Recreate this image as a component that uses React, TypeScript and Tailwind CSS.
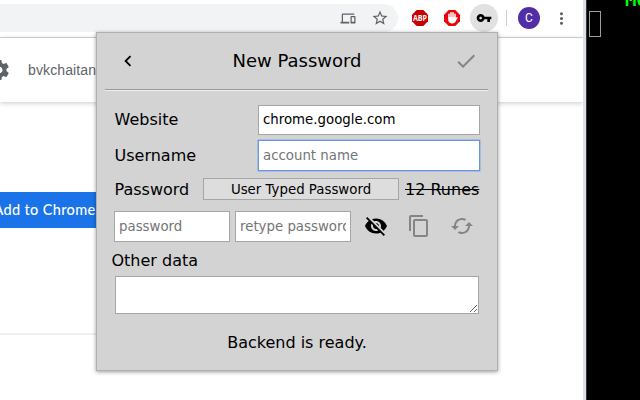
import React from "react";

type IconProps = { d: string; className: string };

function Icon({ d, className }: IconProps) {
  return (
    <svg viewBox="0 0 24 24" className={"shrink-0 " + className} fill="currentColor">
      <path d={d} />
    </svg>
  );
}

const paths = {
  back: "M15.41 7.41L14 6l-6 6 6 6 1.41-1.41L10.83 12z",
  check: "M9 16.17L4.83 12l-1.42 1.41L9 19 21 7l-1.41-1.41z",
  devices:
    "M4 6h18V4H4c-1.1 0-2 .9-2 2v11H0v3h14v-3H4V6zm19 2h-6c-.55 0-1 .45-1 1v10c0 .55.45 1 1 1h6c.55 0 1-.45 1-1V9c0-.55-.45-1-1-1zm-1 9h-4v-7h4v7z",
  star: "M22 9.24l-7.19-.62L12 2 9.19 8.63 2 9.24l5.46 4.73L5.82 21 12 17.27 18.18 21l-1.63-7.03L22 9.24zM12 15.4l-3.76 2.27 1-4.28-3.32-2.88 4.38-.38L12 6.1l1.71 4.04 4.38.38-3.32 2.88 1 4.28L12 15.4z",
  key: "M12.65 10C11.83 7.67 9.61 6 7 6c-3.31 0-6 2.69-6 6s2.69 6 6 6c2.61 0 4.83-1.67 5.65-4H17v4h4v-4h2v-4H12.65zM7 14c-1.1 0-2-.9-2-2s.9-2 2-2 2 .9 2 2-.9 2-2 2z",
  more: "M12 8c1.1 0 2-.9 2-2s-.9-2-2-2-2 .9-2 2 .9 2 2 2zm0 2c-1.1 0-2 .9-2 2s.9 2 2 2 2-.9 2-2-.9-2-2-2zm0 6c-1.1 0-2 .9-2 2s.9 2 2 2 2-.9 2-2-.9-2-2-2z",
  gear: "M19.43 12.98c.04-.32.07-.64.07-.98s-.03-.66-.07-.98l2.11-1.65c.19-.15.24-.42.12-.64l-2-3.46c-.12-.22-.39-.3-.61-.22l-2.49 1c-.52-.4-1.08-.73-1.69-.98l-.38-2.65C14.46 2.18 14.25 2 14 2h-4c-.25 0-.46.18-.49.42l-.38 2.65c-.61.25-1.17.59-1.69.98l-2.49-1c-.23-.09-.49 0-.61.22l-2 3.46c-.13.22-.07.49.12.64l2.11 1.65c-.04.32-.07.65-.07.98s.03.66.07.98l-2.11 1.65c-.19.15-.24.42-.12.64l2 3.46c.12.22.39.3.61.22l2.49-1c.52.4 1.08.73 1.69.98l.38 2.65c.03.24.24.42.49.42h4c.25 0 .46-.18.49-.42l.38-2.65c.61-.25 1.17-.59 1.69-.98l2.49 1c.23.09.49 0 .61-.22l2-3.46c.12-.22.07-.49-.12-.64l-2.11-1.65zM12 15.5c-1.93 0-3.5-1.57-3.5-3.5s1.57-3.5 3.5-3.5 3.5 1.57 3.5 3.5-1.57 3.5-3.5 3.5z",
  copy: "M16 1H4c-1.1 0-2 .9-2 2v14h2V3h12V1zm3 4H8c-1.1 0-2 .9-2 2v14c0 1.1.9 2 2 2h11c1.1 0 2-.9 2-2V7c0-1.1-.9-2-2-2zm0 16H8V7h11v14z",
  hidden:
    "M12 7c2.76 0 5 2.24 5 5 0 .65-.13 1.26-.36 1.83l2.92 2.92c1.51-1.26 2.7-2.89 3.43-4.75-1.73-4.39-6-7.5-11-7.5-1.4 0-2.74.25-3.98.7l2.16 2.16C10.74 7.13 11.35 7 12 7zM2 4.27l2.28 2.28.46.46C3.08 8.3 1.78 10.02 1 12c1.73 4.39 6 7.5 11 7.5 1.55 0 3.03-.3 4.38-.84l.42.42L19.73 22 21 20.73 3.27 3 2 4.27zM7.53 9.8l1.55 1.55c-.05.21-.08.43-.08.65 0 1.66 1.34 3 3 3 .22 0 .44-.03.65-.08l1.55 1.55c-.67.33-1.41.53-2.2.53-2.76 0-5-2.24-5-5 0-.79.2-1.53.53-2.2zm4.31-.78l3.15 3.15.02-.16c0-1.66-1.34-3-3-3l-.17.01z",
  loop: "M19 8l-4 4h3c0 3.31-2.69 6-6 6-1.01 0-1.97-.25-2.8-.7l-1.46 1.46C8.97 19.54 10.43 20 12 20c4.42 0 8-3.58 8-8h3l-4-4zM6 12c0-3.31 2.69-6 6-6 1.01 0 1.97.25 2.8.7l1.46-1.46C15.03 4.46 13.57 4 12 4c-4.42 0-8 3.58-8 8H1l4 4 4-4H6z",
};

function Toolbar() {
  return (
    <div className="flex h-[38px] items-start border-b border-[#d5d7da] bg-white pt-1">
      <div className="flex h-7 w-[398px] shrink-0 items-center justify-end gap-[15px] rounded-r-full bg-[#f1f3f4] pr-[9px] text-[#5f6368]">
        <Icon d={paths.devices} className="h-[15px] w-[16px]" />
        <Icon d={paths.star} className="h-[18px] w-[18px]" />
      </div>
      <div className="ml-[14px] flex h-7 items-center gap-4">
        <svg viewBox="0 0 16 16" className="h-4 w-4">
          <path d="M4.7 0h6.6L16 4.7v6.6L11.3 16H4.7L0 11.3V4.7z" fill="#c90000" />
          <text x="8" y="10.9" textAnchor="middle" textLength="14" lengthAdjust="spacingAndGlyphs" fontSize="8" fontWeight="700" fontFamily="Open Sans, sans-serif" fill="#fff">ABP</text>
        </svg>
        <svg viewBox="0 0 16 16" className="h-4 w-4">
          <path d="M4.7 0h6.6L16 4.7v6.6L11.3 16H4.7L0 11.3V4.7z" fill="#e6060c" />
          <path d="M5 8V4.2M7 7V2.8M9 7V2.8M11 9V4.2" stroke="#fff" strokeWidth="1.5" strokeLinecap="round" />
          <path d="M4.25 7h6.7l.8 1.2 1-1.1c.5-.4 1.2 0 .9.6l-2.2 4.1c-.8 1.2-1.7 1.6-3.1 1.6-2.5 0-4.1-1.2-4.1-3.4z" fill="#fff" />
        </svg>
      </div>
      <div className="ml-[10px] flex h-7 w-7 items-center justify-center rounded-full bg-[#e1e1e1] text-black">
        <Icon d={paths.key} className="h-4 w-4" />
      </div>
      <div className="ml-2 mt-[6px] h-4 w-px bg-[#cdcfd2]" />
      <div className="ml-[11px] mt-[3px] flex h-[22px] w-[22px] items-center justify-center rounded-full bg-[#512da8] font-['Roboto',sans-serif] text-[12px] text-white">
        C
      </div>
      <div className="ml-[12px] mt-[5px] text-[#5f6368]">
        <Icon d={paths.more} className="h-[19px] w-[19px]" />
      </div>
    </div>
  );
}

function Page() {
  return (
    <div className="flex flex-1 flex-col">
      <div className="flex h-16 shrink-0 items-center bg-white text-[#5f6368] shadow-[0_1px_5px_rgba(0,0,0,0.22)]">
        <Icon d={paths.gear} className="-ml-[13px] h-6 w-6" />
        <span className="ml-[17px] font-['Liberation_Sans',sans-serif] text-[14px] tracking-[0.12px]">bvkchaitan</span>
      </div>
      <div className="mt-[90px] flex h-9 w-[97px] shrink-0 items-center justify-end whitespace-nowrap bg-[#1a73e8] pr-[1.5px] font-['Lato',sans-serif] text-[14.5px] font-medium tracking-[0.35px] text-white">
        <span>Add to Chrome</span>
      </div>
      <div className="mt-[105px] h-[2px] w-[97px] bg-[#efefef]" />
    </div>
  );
}

const field =
  "block rounded-none border bg-white px-1 text-[13.33px] outline-none placeholder:text-[#757575] placeholder:opacity-100";

function PasswordPopup() {
  return (
    <div className="absolute left-[96px] top-[32px] flex h-[339px] w-[402px] flex-col border border-[#b0b0b0] bg-[#d3d3d3] font-['DejaVu_Sans',sans-serif] text-[16px] text-black shadow-[0_1px_4px_rgba(0,0,0,0.4)]">
      <div className="ml-[9px] mr-[7px] flex h-14 shrink-0 items-center justify-between px-3 pb-px">
        <Icon d={paths.back} className="-ml-px mt-px h-[22px] w-[22px]" />
        <span className="pl-px text-[18px]">New Password</span>
        <Icon d={paths.check} className="h-[24px] w-[24px] text-[#858585]" />
      </div>
      <div className="ml-2 mr-[9px] h-[2px] shrink-0 border-b border-t border-b-[#eeeeee] border-t-[#9a9a9a]" />
      <div className="ml-[17px] mt-[14px] flex h-[30px] w-[366px] items-center justify-between">
        <span className="-mt-px pl-[0.5px]">Website</span>
        <input readOnly value="chrome.google.com" className={field + " h-[30px] w-[222px] border-[#a6a6a6] pb-[2px]"} />
      </div>
      <div className="ml-[17px] mt-[5px] flex h-[31px] w-[366px] items-center justify-between">
        <span className="pl-[0.5px]">Username</span>
        <input readOnly placeholder="account name" className={field + " h-[31px] w-[222px] border-[#6b97e0] shadow-[0_0_0_0.5px_#7fa6e6]"} />
      </div>
      <div className="ml-[17px] mt-[7px] flex h-[22px] w-[366px] items-center">
        <span className="w-[89px] pl-[0.5px] pt-[2px]">Password</span>
        <button className="h-[22px] w-[196px] border border-[#a6a6a6] bg-[#dddddd] pt-px text-[13.33px] leading-[19px]">User Typed Password</button>
        <span className="ml-[6px] whitespace-nowrap pt-[2px] line-through">12 Runes</span>
      </div>
      <div className="ml-[17px] mt-[11px] flex h-[31px] items-center">
        <input readOnly placeholder="password" className={field + " h-[31px] w-[116px] border-[#a6a6a6]"} />
        <input readOnly placeholder="retype password" className={field + " ml-[5px] h-[31px] w-[116px] border-[#a6a6a6]"} />
        <Icon d={paths.hidden} className="-mt-px ml-[12.5px] h-6 w-6" />
        <Icon d={paths.copy} className="-mt-px ml-[19px] h-6 w-6 text-[#858585]" />
        <Icon d={paths.loop} className="-mt-px ml-[19.5px] h-6 w-6 text-[#858585]" />
      </div>
      <div className="ml-[14.5px] mt-[8px] h-[22px] leading-[22px]">Other data</div>
      <textarea readOnly className="ml-[18px] mt-[4px] block h-[38px] w-[364px] shrink-0 resize border border-[#a6a6a6] bg-white outline-none" />
      <div className="mt-[18px] text-center leading-[22px]">Backend is ready.</div>
    </div>
  );
}

export default function App() {
  return (
    <div className="relative flex h-[400px] w-[640px] overflow-hidden bg-white">
      <div className="flex w-[583px] shrink-0 flex-col overflow-hidden">
        <Toolbar />
        <Page />
      </div>
      <div className="w-1 shrink-0 border-r border-[#33373a] bg-[#dce0e4]" />
      <div className="flex flex-1 items-start overflow-hidden bg-black">
        <div className="ml-[2px] mt-[11px] h-[26px] w-3 shrink-0 border border-[#93a1a1]" />
        <span className="-mt-[10px] ml-6 font-['DejaVu_Sans_Mono',monospace] text-[19px] font-bold leading-[18px] text-[#00ff00]">Mo</span>
      </div>
      <PasswordPopup />
    </div>
  );
}
